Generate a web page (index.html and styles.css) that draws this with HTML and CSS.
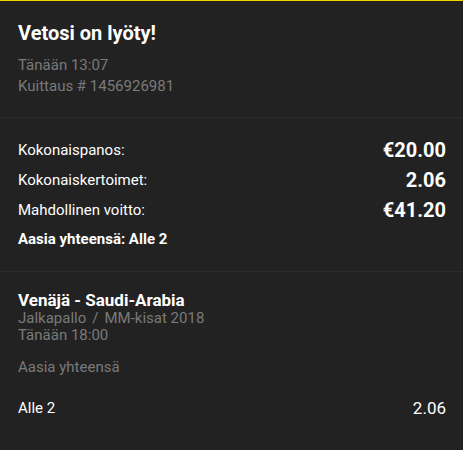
FILE: index.html
```html
<!DOCTYPE html>
<html>
<head>
<meta charset="utf-8">
<link rel="stylesheet" href="styles.css">
</head>
<body>
<div class="receipt">
  <section class="head">
    <h1 class="title">Vetosi on lyöty!</h1>
    <div class="muted">Tänään 13:07</div>
    <div class="muted">Kuittaus # 1456926981</div>
  </section>
  <section class="summary">
    <div class="row"><span class="label">Kokonaispanos:</span><span class="value">€20.00</span></div>
    <div class="row"><span class="label">Kokonaiskertoimet:</span><span class="value">2.06</span></div>
    <div class="row"><span class="label">Mahdollinen voitto:</span><span class="value">€41.20</span></div>
    <div class="bet-name">Aasia yhteensä: Alle 2</div>
  </section>
  <section class="event">
    <div class="event-name">Venäjä - Saudi-Arabia</div>
    <div class="muted">Jalkapallo<span class="sep">/</span>MM-kisat 2018</div>
    <div class="muted">Tänään 18:00</div>
    <div class="muted market">Aasia yhteensä</div>
    <div class="sel-row"><span class="sel">Alle 2</span><span class="odds">2.06</span></div>
  </section>
</div>
</body>
</html>
```
FILE: styles.css
```css
html, body {
  margin: 0;
  padding: 0;
  background: #222222;
}
body {
  font-family: Roboto, "Noto Sans", sans-serif;
  color: #ffffff;
  width: 463px;
  height: 450px;
  overflow: hidden;
}
.receipt {
  border-top: 1px solid #f5d300;
}
.head {
  padding: 20px 17px 20px 18px;
  border-bottom: 1px solid #2c2c2c;
}
.title {
  margin: 0 0 10px 0;
  font-size: 20px;
  font-weight: 700;
  line-height: 24px;
}
.muted {
  color: #7a7a7a;
  font-size: 15px;
  line-height: 21px;
}
.sep {
  margin: 0 6px;
}
.summary {
  padding: 17px 17px 20px 18px;
  border-bottom: 1px solid #2c2c2c;
}
.row {
  display: flex;
  justify-content: space-between;
  align-items: center;
  height: 30px;
}
.label {
  font-size: 15px;
}
.value {
  font-size: 20px;
  font-weight: 700;
}
.bet-name {
  margin-top: 2px;
  font-size: 15px;
  font-weight: 700;
  line-height: 24px;
}
.event {
  padding: 18px 17px 20px 18px;
}
.event-name {
  font-size: 17px;
  font-weight: 700;
  line-height: 20px;
}
.event .muted {
  line-height: 17px;
}
.event .market {
  margin-top: 15px;
}
.sel-row {
  display: flex;
  justify-content: space-between;
  align-items: center;
  margin-top: 22px;
}
.sel {
  font-size: 15px;
}
.odds {
  font-size: 17px;
}
```
